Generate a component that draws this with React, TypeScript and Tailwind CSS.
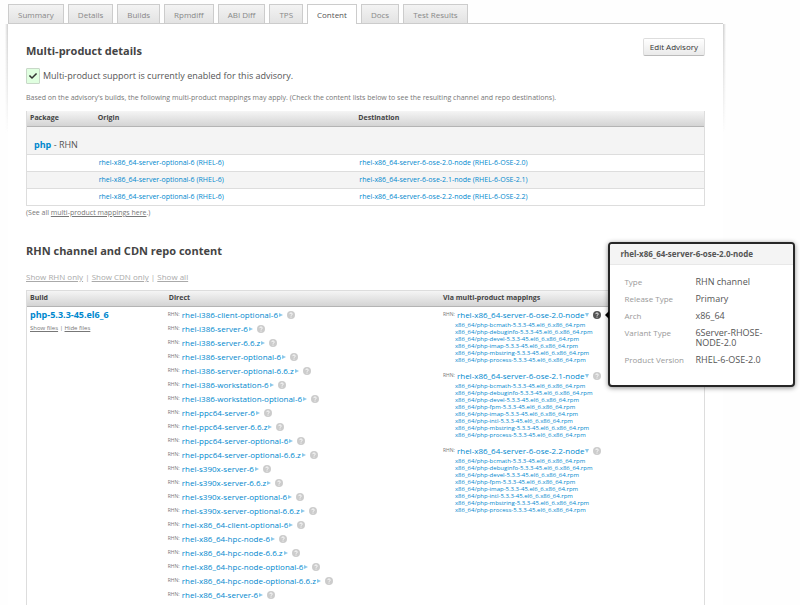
import React from "react";
import { FaCheck } from "react-icons/fa";

const tabs = ["Summary", "Details", "Builds", "Rpmdiff", "ABI Diff", "TPS", "Content", "Docs", "Test Results"];

const mappings = ["2.0", "2.1", "2.2"];

const directChannels = [
  "rhel-i386-client-optional-6",
  "rhel-i386-server-6",
  "rhel-i386-server-6.6.z",
  "rhel-i386-server-optional-6",
  "rhel-i386-server-optional-6.6.z",
  "rhel-i386-workstation-6",
  "rhel-i386-workstation-optional-6",
  "rhel-ppc64-server-6",
  "rhel-ppc64-server-6.6.z",
  "rhel-ppc64-server-optional-6",
  "rhel-ppc64-server-optional-6.6.z",
  "rhel-s390x-server-6",
  "rhel-s390x-server-6.6.z",
  "rhel-s390x-server-optional-6",
  "rhel-s390x-server-optional-6.6.z",
  "rhel-x86_64-client-optional-6",
  "rhel-x86_64-hpc-node-6",
  "rhel-x86_64-hpc-node-6.6.z",
  "rhel-x86_64-hpc-node-optional-6",
  "rhel-x86_64-hpc-node-optional-6.6.z",
  "rhel-x86_64-server-6",
];

const mappedChannels = [
  {
    name: "rhel-x86_64-server-6-ose-2.0-node",
    packages: ["bcmath", "debuginfo", "devel", "imap", "mbstring", "process"],
  },
  {
    name: "rhel-x86_64-server-6-ose-2.1-node",
    packages: ["bcmath", "debuginfo", "devel", "fpm", "imap", "intl", "mbstring", "process"],
  },
  {
    name: "rhel-x86_64-server-6-ose-2.2-node",
    packages: ["bcmath", "debuginfo", "devel", "fpm", "imap", "intl", "mbstring", "process"],
  },
];

const channelDetails = [
  ["Type", "RHN channel"],
  ["Release Type", "Primary"],
  ["Arch", "x86_64"],
  ["Variant Type", "6Server-RHOSE-NODE-2.0"],
  ["Product Version", "RHEL-6-OSE-2.0"],
];

function Tooltip() {
  return (
    <div
      role="tooltip"
      className="absolute -top-[69px] left-[15px] z-10 w-[187px] rounded-[4px] border-2 border-[#262626] bg-white whitespace-normal shadow-[0_1px_5px_rgba(0,0,0,0.45)]"
    >
      <svg viewBox="0 0 4 8" className="absolute top-[67px] -left-[5px] h-2 w-1 fill-black">
        <path d="M4 0v8L0 4z" />
      </svg>
      <h3 className="rounded-t-[2px] border-b border-[#e8e8e8] bg-[#f4f4f4] px-[10px] text-[8px] leading-[20px] font-bold text-[#555]">
        rhel-x86_64-server-6-ose-2.0-node
      </h3>
      <dl className="grid grid-cols-[63px_1fr] gap-x-2 gap-y-[7px] pt-3 pr-5 pb-5 pl-[14px] leading-[10px]">
        {channelDetails.map(([label, value]) => (
          <React.Fragment key={label}>
            <dt className="text-[8px] whitespace-nowrap text-[#999]">{label}</dt>
            <dd className="text-[9px] text-[#555]">{value}</dd>
          </React.Fragment>
        ))}
      </dl>
    </div>
  );
}

function HelpIcon() {
  return (
    <svg viewBox="0 0 16 16" className="size-2">
      <circle cx="8" cy="8" r="8" fill="currentColor" />
      <path d="M5.5 6.2c0-3.2 5-3.2 5 0 0 1.600-2.500 1.800-2.500 3.400" fill="none" stroke="white" strokeWidth="1.800" />
      <circle cx="8" cy="12" r="1.200" fill="white" />
    </svg>
  );
}

function Channel({ name, open = false, active = false }: { name: string; open?: boolean; active?: boolean }) {
  return (
    <div className="flex h-[14px] items-center whitespace-nowrap">
      <span className="w-[14px] text-[5px] text-[#777]">RHN:</span>
      <a href="#channel" className="text-[8px] text-[#0088ce]">{name}</a>
      <svg viewBox="0 0 4 4" className="ml-px h-1 w-1 fill-[#8cc8ea]">
        {open ? <path d="M0 0h4L2 4z" /> : <path d="M0 0l4 2-4 2z" />}
      </svg>
      <span className="relative ml-1 flex">
        <button type="button" aria-label={`About ${name}`} className={active ? "text-[#555]" : "text-[#ccc]"}>
          <HelpIcon />
        </button>
        {active && <Tooltip />}
      </span>
    </div>
  );
}

const headRow = "h-[16px] border-b border-[#b4b4b4] bg-linear-to-b from-[#f5f5f5] to-[#d4d4d4] text-left text-[7px] text-[#444]";

export default function App() {
  return (
    <div className="min-h-screen bg-[#fefefe] pt-1 pr-[77px] pl-2 font-['Open_Sans','Noto_Sans',sans-serif] text-[#555]">
      <nav className="flex gap-1">
        {tabs.map((tab) => (
          <a
            key={tab}
            href="#tab"
            className={
              tab === "Content"
                ? "relative z-10 h-5 border border-b-0 border-[#ccc] bg-white px-[9px] text-[8px] leading-[20px] text-[#555]"
                : "h-5 border border-b-0 border-[#ccc] bg-linear-to-b from-[#f3f3f3] to-[#e2e2e2] px-[9px] text-[8px] leading-[20px] text-[#888]"
            }
          >
            {tab}
          </a>
        ))}
      </nav>

      <main className="relative -mt-px border-t border-[#ccc] bg-white px-[18px] pt-[14px]">
        <span className="absolute top-0 right-full h-[110px] w-[3px] bg-linear-to-b from-[#ccc] to-transparent mask-l-from-0% mask-l-to-100%" />
        <span className="absolute top-0 left-full h-[110px] w-[3px] bg-linear-to-b from-[#ccc] to-transparent mask-r-from-0% mask-r-to-100%" />

        <div className="flex items-start justify-between">
          <h2 className="text-[11px] leading-[26px] font-bold text-[#444]">Multi-product details</h2>
          <button
            type="button"
            className="h-[18px] rounded-[2px] border border-[#ddd] border-b-[#bbb] bg-linear-to-b from-white to-[#eaeaea] px-[6px] text-[8px] text-[#333]"
          >
            Edit Advisory
          </button>
        </div>

        <p className="mt-1 flex h-4 items-center gap-[3px] text-[9px]">
          <span className="flex h-4 w-[14px] items-center justify-center rounded-[1px] border border-[#c8d8c8] bg-[#e0ffe0]">
            <FaCheck className="size-2 text-[#333]" />
          </span>
          Multi-product support is currently enabled for this advisory.
        </p>

        <p className="mt-2 text-[7px] leading-[12px] text-[#777]">
          Based on the advisory's builds, the following multi-product mappings may apply. (Check the content lists below
          to see the resulting channel and repo destinations).
        </p>

        <table className="mt-[7px] w-full table-fixed border-separate border-spacing-0 border border-t-0 border-[#ddd] text-[7px]">
          <thead>
            <tr>
              <th className={`${headRow} w-[10%] pl-[3px]`}>Package</th>
              <th className={`${headRow} w-[38.5%] pl-[3px]`}>Origin</th>
              <th className={`${headRow} pl-[3px]`}>Destination</th>
            </tr>
          </thead>
          <tbody>
            <tr>
              <td colSpan={3} className="h-[28px] border-b border-[#ddd] bg-[#f4f4f4] pt-2 pl-[7px] text-[9px]">
                <a href="#php" className="font-bold text-[#0088ce]">php</a> - RHN
              </td>
            </tr>
            {mappings.map((version, i) => (
              <tr key={version} className={i === 1 ? "bg-[#f4f4f4] text-[#0088ce]" : "text-[#0088ce]"}>
                <td className={i < 2 ? "h-[17px] border-b border-[#ddd]" : "h-4"} />
                <td className={i < 2 ? "border-b border-[#ddd] pl-1" : "pl-1"}>
                  <a href="#origin">rhel-x86_64-server-optional-6 (RHEL-6)</a>
                </td>
                <td className={i < 2 ? "border-b border-[#ddd] pl-1" : "pl-1"}>
                  <a href="#destination">{`rhel-x86_64-server-6-ose-${version}-node (RHEL-6-OSE-${version})`}</a>
                </td>
              </tr>
            ))}
          </tbody>
        </table>
        <p className="mt-px text-[7px] leading-[12px] text-[#777]">
          (See all <a href="#mappings" className="underline">multi-product mappings here</a>.)
        </p>

        <h2 className="mt-[26px] text-[11px] leading-[12px] font-bold text-[#444]">RHN channel and CDN repo content</h2>
        <p className="mt-[14px] text-[8px] leading-[12px] text-[#aaa]">
          <a href="#rhn" className="underline">Show RHN only</a> | <a href="#cdn" className="underline">Show CDN only</a>
          {" | "}
          <a href="#all" className="underline">Show all</a>
        </p>

        <table className="mt-[7px] w-full table-fixed border-separate border-spacing-0 border border-[#ddd]">
          <thead>
            <tr>
              <th className={`${headRow} w-[20.5%] pl-[3px]`}>Build</th>
              <th className={`${headRow} w-[40.5%] pl-[3px]`}>Direct</th>
              <th className={`${headRow} pl-[3px]`}>Via multi-product mappings</th>
            </tr>
          </thead>
          <tbody>
            <tr className="align-top">
              <td className="pt-px pl-[3px]">
                <a href="#build" className="block text-[9px] leading-[14px] font-bold text-[#0088ce]">php-5.3.3-45.el6_6</a>
                <p className="text-[6px] leading-[12px] text-[#777]">
                  <a href="#show" className="underline">Show files</a> | <a href="#hide" className="underline">Hide files</a>
                </p>
              </td>
              <td className="pt-px pb-4 pl-[2px]">
                {directChannels.map((name) => (
                  <Channel key={name} name={name} />
                ))}
              </td>
              <td className="pt-px pl-[3px]">
                {mappedChannels.map((channel, i) => (
                  <div key={channel.name} className="pb-[5px]">
                    <Channel name={channel.name} open active={i === 0} />
                    <ul className="pl-3 text-[6px] leading-[7px] text-[#0088ce]">
                      {channel.packages.map((pkg) => (
                        <li key={pkg}>
                          <a href="#file">{`x86_64/php-${pkg}-5.3.3-45.el6_6.x86_64.rpm`}</a>
                        </li>
                      ))}
                    </ul>
                  </div>
                ))}
              </td>
            </tr>
          </tbody>
        </table>
      </main>
    </div>
  );
}
